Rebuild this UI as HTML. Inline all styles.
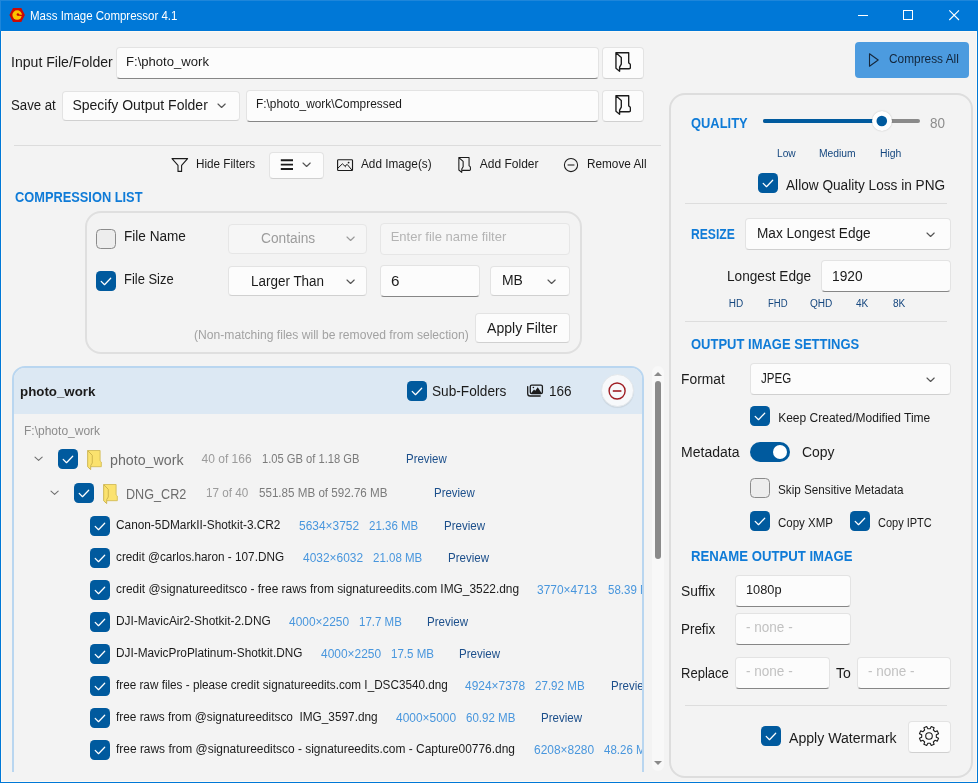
<!DOCTYPE html><html lang="en"><head><meta charset="utf-8"><title>Mass Image Compressor 4.1</title><style>

html,body{margin:0;padding:0;background:#f3f3f3;}
body{width:978px;height:783px;position:relative;overflow:hidden;font-family:"Liberation Sans", sans-serif;}
#w,#w div,#w svg,#w span{position:absolute;}
#w{left:0;top:0;width:978px;height:783px;overflow:hidden;will-change:transform;}
#lc{left:0;top:0;width:978px;height:772px;overflow:hidden;clip-path:inset(366px 334px 0 12px);}
#li{left:0;top:0;width:978px;height:772px;clip-path:inset(0 336px 0 14px);}
.t{white-space:pre;height:20px;line-height:20px;transform-origin:0 50%;}
.cb{width:20px;height:20px;box-sizing:border-box;border-radius:4.5px;}
.cb.on{background:#005a9e;}
.cb.off{background:#ededed;border:1px solid #8b8b8b;}

</style></head><body><div id="w">
<div style="left:0px;top:0px;width:978px;height:783px;background:#0078d7;"></div>
<div style="left:1px;top:31px;width:976px;height:751px;background:#fdf9f3;"></div>
<div style="left:2px;top:32px;width:974px;height:749px;background:#f3f3f3;"></div>
<div style="left:0px;top:0px;width:978px;height:1px;background:#1e86da;"></div>
<div style="left:0px;top:0px;width:1px;height:31px;background:#1e86da;"></div>
<svg style="left:9px;top:7px" width="17" height="16" viewBox="9 7 17 16"><path d="M9.4 15 L13 7.9 H21.3 L24.9 15 L21.3 22.1 H13 Z" fill="#cb0a04"/><circle cx="17.15" cy="15.1" r="4.75" fill="#fbc400"/><circle cx="17.9" cy="14.4" r="1.25" fill="#cb0a04"/><path d="M17.9 14.9 L22.2 15.6" stroke="#cb0a04" stroke-width="1.2"/></svg>
<svg style="left:853px;top:5px" width="120" height="22" viewBox="853 5 120 22"><path d="M858 15.5 H868" stroke="#fff" stroke-width="1"/><rect x="903.5" y="10.5" width="9" height="9" fill="none" stroke="#fff" stroke-width="1"/><path d="M949.3 10.3 L959 20 M959 10.3 L949.3 20" stroke="#fff" stroke-width="1.1"/></svg>
<div style="left:116px;top:47px;width:483px;height:32px;box-sizing:border-box;background:#fcfcfc;border:1px solid #e3e3e3;border-bottom:1px solid #868686;border-radius:4px;"></div>
<div style="left:602px;top:47px;width:42px;height:32px;box-sizing:border-box;background:#fcfcfc;border:1px solid #e3e3e3;border-bottom:1px solid #d0d0d0;border-radius:4px;"></div>
<svg style="left:615px;top:52px" width="16" height="20" viewBox="0 0 16 20"><path d="M0.95 0.7 H13.7 V10.9 Q15.4 11.6 15.4 13.1 V15.6 Q15.4 16.7 14.2 16.7 H5" fill="none" stroke="#1b1b1b" stroke-width="1.35" stroke-linejoin="round"/><path d="M0.95 0.7 L6.3 5.5 V12.1 L4.6 15.1 V19.2 L0.95 16.3 Z" fill="none" stroke="#1b1b1b" stroke-width="1.35" stroke-linejoin="round"/></svg>
<div style="left:62px;top:91px;width:178px;height:30px;box-sizing:border-box;background:#fcfcfc;border:1px solid #e3e3e3;border-bottom:1px solid #d0d0d0;border-radius:4px;"></div>
<svg style="left:216.4px;top:101.75px" width="11.2" height="7.5" viewBox="-2 -2 11.2 7.5"><path d="M0 0 L3.6 3.5 L7.2 0" fill="none" stroke="#555555" stroke-width="1.15" stroke-linecap="round" stroke-linejoin="round"/></svg>
<div style="left:246px;top:90px;width:353px;height:32px;box-sizing:border-box;background:#fcfcfc;border:1px solid #e3e3e3;border-bottom:1px solid #868686;border-radius:4px;"></div>
<div style="left:602px;top:90px;width:42px;height:32px;box-sizing:border-box;background:#fcfcfc;border:1px solid #e3e3e3;border-bottom:1px solid #d0d0d0;border-radius:4px;"></div>
<svg style="left:615px;top:95px" width="16" height="20" viewBox="0 0 16 20"><path d="M0.95 0.7 H13.7 V10.9 Q15.4 11.6 15.4 13.1 V15.6 Q15.4 16.7 14.2 16.7 H5" fill="none" stroke="#1b1b1b" stroke-width="1.35" stroke-linejoin="round"/><path d="M0.95 0.7 L6.3 5.5 V12.1 L4.6 15.1 V19.2 L0.95 16.3 Z" fill="none" stroke="#1b1b1b" stroke-width="1.35" stroke-linejoin="round"/></svg>
<div style="left:14px;top:145px;width:647px;height:1px;background:#dcdcdc;"></div>
<div style="left:855px;top:42px;width:114px;height:36px;background:#4c9bdf;border-radius:4px;"></div>
<svg style="left:867px;top:52px" width="14" height="16" viewBox="0 0 14 16"><path d="M2.5 1.8 L11.2 8 L2.5 14.2 Z" fill="none" stroke="#16283c" stroke-width="1.1" stroke-linejoin="round"/></svg>
<svg style="left:171px;top:157px" width="18" height="16" viewBox="0 0 18 16"><path d="M1 1.6 H16.6 L10.6 8.4 V14.4 H7 V8.4 Z" fill="none" stroke="#1b1b1b" stroke-width="1.1" stroke-linejoin="round"/></svg>
<div style="left:269px;top:152px;width:55px;height:27px;box-sizing:border-box;background:#fcfcfc;border:1px solid #e3e3e3;border-bottom:1px solid #d0d0d0;border-radius:4px;"></div>
<svg style="left:280px;top:158.4px" width="14" height="13" viewBox="0 0 14 13"><path d="M0.8 2.2 H13 M0.8 6.6 H13 M0.8 11 H13" stroke="#1b1b1b" stroke-width="1.9"/></svg>
<svg style="left:301.4px;top:161.25px" width="11.2" height="7.5" viewBox="-2 -2 11.2 7.5"><path d="M0 0 L3.6 3.5 L7.2 0" fill="none" stroke="#555555" stroke-width="1.15" stroke-linecap="round" stroke-linejoin="round"/></svg>
<svg style="left:336px;top:158px" width="18" height="14" viewBox="0 0 18 14"><rect x="1.6" y="1.7" width="14.9" height="10.8" rx="0.8" fill="none" stroke="#1b1b1b" stroke-width="1.15"/><path d="M1.4 10.6 L6.4 5.8 L9.8 9 M9 8.2 L11.2 6.4 L16 12.2" fill="none" stroke="#1b1b1b" stroke-width="1" stroke-linejoin="round"/><circle cx="12.6" cy="4.6" r="0.9" fill="#1b1b1b"/></svg>
<svg style="left:457.5px;top:157.3px" width="13" height="16" viewBox="0 0 16 20"><path d="M0.95 0.7 H13.7 V10.9 Q15.4 11.6 15.4 13.1 V15.6 Q15.4 16.7 14.2 16.7 H5" fill="none" stroke="#1b1b1b" stroke-width="1.35" stroke-linejoin="round"/><path d="M0.95 0.7 L6.3 5.5 V12.1 L4.6 15.1 V19.2 L0.95 16.3 Z" fill="none" stroke="#1b1b1b" stroke-width="1.35" stroke-linejoin="round"/></svg>
<svg style="left:563px;top:157px" width="16" height="16" viewBox="0 0 16 16"><circle cx="8" cy="8" r="6.6" fill="none" stroke="#1b1b1b" stroke-width="1.05"/><path d="M4.6 8 H11.4" stroke="#1b1b1b" stroke-width="1.05"/></svg>
<div style="left:85px;top:211px;width:497px;height:143px;box-sizing:border-box;border:2px solid #dfdfdf;border-radius:16px;"></div>
<div class="cb off" style="left:96px;top:229px"></div>
<div style="left:228px;top:224px;width:139px;height:30px;box-sizing:border-box;background:#f6f6f6;border:1px solid #e6e6e6;border-radius:4px;"></div>
<svg style="left:344.7px;top:235.25px" width="11.2" height="7.5" viewBox="-2 -2 11.2 7.5"><path d="M0 0 L3.6 3.5 L7.2 0" fill="none" stroke="#9a9a9a" stroke-width="1.15" stroke-linecap="round" stroke-linejoin="round"/></svg>
<div style="left:380px;top:223px;width:190px;height:32px;box-sizing:border-box;background:#f6f6f6;border:1px solid #e6e6e6;border-radius:4px;"></div>
<div class="cb on" style="left:96px;top:271px"><svg width="20" height="20" viewBox="0 0 20 20"><path d="M5.2 10.4 L8.5 13.7 L14.7 7.2" fill="none" stroke="#fff" stroke-width="1.25" stroke-linecap="round" stroke-linejoin="round"/></svg></div>
<div style="left:228px;top:266px;width:139px;height:30px;box-sizing:border-box;background:#fcfcfc;border:1px solid #e3e3e3;border-bottom:1px solid #d0d0d0;border-radius:4px;"></div>
<svg style="left:344.7px;top:277.75px" width="11.2" height="7.5" viewBox="-2 -2 11.2 7.5"><path d="M0 0 L3.6 3.5 L7.2 0" fill="none" stroke="#555555" stroke-width="1.15" stroke-linecap="round" stroke-linejoin="round"/></svg>
<div style="left:380px;top:265px;width:100px;height:32px;box-sizing:border-box;background:#fcfcfc;border:1px solid #e3e3e3;border-bottom:1px solid #868686;border-radius:4px;"></div>
<div style="left:490px;top:266px;width:80px;height:30px;box-sizing:border-box;background:#fcfcfc;border:1px solid #e3e3e3;border-bottom:1px solid #d0d0d0;border-radius:4px;"></div>
<svg style="left:546.4px;top:277.75px" width="11.2" height="7.5" viewBox="-2 -2 11.2 7.5"><path d="M0 0 L3.6 3.5 L7.2 0" fill="none" stroke="#555555" stroke-width="1.15" stroke-linecap="round" stroke-linejoin="round"/></svg>
<div style="left:475px;top:313px;width:95px;height:30px;box-sizing:border-box;background:#fcfcfc;border:1px solid #e3e3e3;border-bottom:1px solid #d0d0d0;border-radius:4px;"></div>
<div style="left:652px;top:366px;width:12px;height:405px;background:#f8f8f8;border-radius:6px;"></div>
<svg style="left:653px;top:371px" width="10" height="6" viewBox="0 0 10 6"><path d="M1 5 L5 1 L9 5 Z" fill="#8a8a8a"/></svg>
<div style="left:655px;top:381px;width:6px;height:177.5px;background:#8a8a8a;border-radius:3px;"></div>
<svg style="left:653px;top:760px" width="10" height="6" viewBox="0 0 10 6"><path d="M1 1 L5 5 L9 1 Z" fill="#8a8a8a"/></svg>
<div style="left:669px;top:93px;width:304px;height:685px;box-sizing:border-box;border:2px solid #dddddd;border-radius:16px;"></div>
<div style="left:763px;top:119px;width:157px;height:4px;background:#8a8a8a;border-radius:2px;"></div>
<div style="left:763px;top:119px;width:119px;height:4px;background:#005a9e;border-radius:2px;"></div>
<div style="left:871.7px;top:111px;width:20px;height:20px;border-radius:10px;background:#fff;box-shadow:0 0 1.5px rgba(0,0,0,.25)"></div>
<svg style="left:871px;top:110px" width="22" height="22" viewBox="0 0 22 22"><circle cx="10.8" cy="11" r="5.3" fill="#005a9e"/></svg>
<div class="cb on" style="left:758px;top:173px"><svg width="20" height="20" viewBox="0 0 20 20"><path d="M5.2 10.4 L8.5 13.7 L14.7 7.2" fill="none" stroke="#fff" stroke-width="1.25" stroke-linecap="round" stroke-linejoin="round"/></svg></div>
<div style="left:685px;top:203px;width:261.5px;height:1px;background:#dddddd;"></div>
<div style="left:745px;top:218px;width:206px;height:32px;box-sizing:border-box;background:#fcfcfc;border:1px solid #e3e3e3;border-bottom:1px solid #d0d0d0;border-radius:4px;"></div>
<svg style="left:925.1999999999999px;top:230.75px" width="11.2" height="7.5" viewBox="-2 -2 11.2 7.5"><path d="M0 0 L3.6 3.5 L7.2 0" fill="none" stroke="#555555" stroke-width="1.15" stroke-linecap="round" stroke-linejoin="round"/></svg>
<div style="left:821px;top:260px;width:130px;height:32px;box-sizing:border-box;background:#fcfcfc;border:1px solid #e3e3e3;border-bottom:1px solid #868686;border-radius:4px;"></div>
<div style="left:685px;top:321px;width:261.5px;height:1px;background:#dddddd;"></div>
<div style="left:750px;top:363px;width:201px;height:32px;box-sizing:border-box;background:#fcfcfc;border:1px solid #e3e3e3;border-bottom:1px solid #d0d0d0;border-radius:4px;"></div>
<svg style="left:925.1999999999999px;top:375.75px" width="11.2" height="7.5" viewBox="-2 -2 11.2 7.5"><path d="M0 0 L3.6 3.5 L7.2 0" fill="none" stroke="#555555" stroke-width="1.15" stroke-linecap="round" stroke-linejoin="round"/></svg>
<div class="cb on" style="left:750px;top:406px"><svg width="20" height="20" viewBox="0 0 20 20"><path d="M5.2 10.4 L8.5 13.7 L14.7 7.2" fill="none" stroke="#fff" stroke-width="1.25" stroke-linecap="round" stroke-linejoin="round"/></svg></div>
<div style="left:750px;top:442px;width:40px;height:20px;background:#005a9e;border-radius:10px;"></div>
<div style="left:772.6px;top:445px;width:14px;height:14px;border-radius:7px;background:#fff"></div>
<div class="cb off" style="left:750px;top:478px"></div>
<div class="cb on" style="left:750px;top:511px"><svg width="20" height="20" viewBox="0 0 20 20"><path d="M5.2 10.4 L8.5 13.7 L14.7 7.2" fill="none" stroke="#fff" stroke-width="1.25" stroke-linecap="round" stroke-linejoin="round"/></svg></div>
<div class="cb on" style="left:850px;top:511px"><svg width="20" height="20" viewBox="0 0 20 20"><path d="M5.2 10.4 L8.5 13.7 L14.7 7.2" fill="none" stroke="#fff" stroke-width="1.25" stroke-linecap="round" stroke-linejoin="round"/></svg></div>
<div style="left:735px;top:575px;width:116px;height:32px;box-sizing:border-box;background:#fcfcfc;border:1px solid #e3e3e3;border-bottom:1px solid #868686;border-radius:4px;"></div>
<div style="left:735px;top:613px;width:116px;height:32px;box-sizing:border-box;background:#fcfcfc;border:1px solid #e3e3e3;border-bottom:1px solid #868686;border-radius:4px;"></div>
<div style="left:735px;top:657px;width:95px;height:32px;box-sizing:border-box;background:#fcfcfc;border:1px solid #e3e3e3;border-bottom:1px solid #868686;border-radius:4px;"></div>
<div style="left:857px;top:657px;width:94px;height:32px;box-sizing:border-box;background:#fcfcfc;border:1px solid #e3e3e3;border-bottom:1px solid #868686;border-radius:4px;"></div>
<div style="left:685px;top:705px;width:261.5px;height:1px;background:#dddddd;"></div>
<div class="cb on" style="left:761px;top:726px"><svg width="20" height="20" viewBox="0 0 20 20"><path d="M5.2 10.4 L8.5 13.7 L14.7 7.2" fill="none" stroke="#fff" stroke-width="1.25" stroke-linecap="round" stroke-linejoin="round"/></svg></div>
<div style="left:908px;top:721px;width:43px;height:32px;box-sizing:border-box;background:#fcfcfc;border:1px solid #e3e3e3;border-bottom:1px solid #d0d0d0;border-radius:4px;"></div>
<svg style="left:918px;top:725px" width="22" height="22" viewBox="0 0 22 22"><path d="M20.53 13.29 L19.36 16.12 L16.99 15.35 L15.35 16.99 L16.12 19.36 L13.29 20.53 L12.16 18.31 L9.84 18.31 L8.71 20.53 L5.88 19.36 L6.65 16.99 L5.01 15.35 L2.64 16.12 L1.47 13.29 L3.69 12.16 L3.69 9.84 L1.47 8.71 L2.64 5.88 L5.01 6.65 L6.65 5.01 L5.88 2.64 L8.71 1.47 L9.84 3.69 L12.16 3.69 L13.29 1.47 L16.12 2.64 L15.35 5.01 L16.99 6.65 L19.36 5.88 L20.53 8.71 L18.31 9.84 L18.31 12.16 Z" fill="none" stroke="#1b1b1b" stroke-width="1.1" stroke-linejoin="round"/><circle cx="11" cy="11" r="3.3" fill="none" stroke="#1b1b1b" stroke-width="1.1"/></svg>
<div id="lc">
<div style="left:12px;top:366px;width:632px;height:460px;box-sizing:border-box;border:2px solid #b9d6f0;border-radius:13px;background:#f3f3f3;overflow:hidden"><div style="left:0;top:0;width:632px;height:46px;background:#dce8f3"></div></div>
<div id="li">
<div class="cb on" style="left:407px;top:381px"><svg width="20" height="20" viewBox="0 0 20 20"><path d="M5.2 10.4 L8.5 13.7 L14.7 7.2" fill="none" stroke="#fff" stroke-width="1.25" stroke-linecap="round" stroke-linejoin="round"/></svg></div>
<svg style="left:526px;top:383px" width="18" height="15" viewBox="526 383 18 15"><path d="M527.7 386.6 V393.4 Q527.7 396 530.2 396 H540.2" fill="none" stroke="#1b1b1b" stroke-width="1.3" stroke-linecap="round"/><rect x="530.3" y="385.2" width="12.1" height="8.5" rx="1.4" fill="none" stroke="#1b1b1b" stroke-width="1.3"/><path d="M530.8 393.4 L534 389.6 L535.3 390.8 L537.7 387.3 L541.9 393.4 Z" fill="#1b1b1b"/><circle cx="533.4" cy="387.5" r="0.8" fill="#1b1b1b"/></svg>
<div style="left:600.6px;top:374.4px;width:33px;height:33px;box-sizing:border-box;border-radius:17px;background:#f7f9fb;border:1px solid #e3e7eb;box-shadow:0 1px 1px rgba(0,0,0,.08)"></div>
<svg style="left:607px;top:381px" width="20" height="20" viewBox="0 0 20 20"><circle cx="10.1" cy="10" r="8" fill="none" stroke="#9f1d23" stroke-width="1.4"/><path d="M5.8 10 H14.4" stroke="#9f1d23" stroke-width="1.6"/></svg>
<svg style="left:32.6px;top:455.45px" width="11.2" height="7.5" viewBox="-2 -2 11.2 7.5"><path d="M0 0 L3.6 3.5 L7.2 0" fill="none" stroke="#6e6e6e" stroke-width="1.05" stroke-linecap="round" stroke-linejoin="round"/></svg>
<div class="cb on" style="left:58px;top:449px"><svg width="20" height="20" viewBox="0 0 20 20"><path d="M5.2 10.4 L8.5 13.7 L14.7 7.2" fill="none" stroke="#fff" stroke-width="1.25" stroke-linecap="round" stroke-linejoin="round"/></svg></div>
<svg style="left:86.6px;top:450px" width="16" height="21" viewBox="0 0 16 21"><path d="M0.66 0.5 H13.1 V10.9 L14.3 12 V16.7 H4" fill="#fbe26e" stroke="#d3bc58" stroke-width="0.9" stroke-linejoin="round"/><path d="M0.66 0.6 L5.27 5.3 V13 L3.7 15.6 V19.6 L0.66 16.8 Z" fill="#fbe26e" stroke="#c9b04a" stroke-width="0.9" stroke-linejoin="round"/></svg>
<svg style="left:48.6px;top:489.25px" width="11.2" height="7.5" viewBox="-2 -2 11.2 7.5"><path d="M0 0 L3.6 3.5 L7.2 0" fill="none" stroke="#6e6e6e" stroke-width="1.05" stroke-linecap="round" stroke-linejoin="round"/></svg>
<div class="cb on" style="left:74px;top:483px"><svg width="20" height="20" viewBox="0 0 20 20"><path d="M5.2 10.4 L8.5 13.7 L14.7 7.2" fill="none" stroke="#fff" stroke-width="1.25" stroke-linecap="round" stroke-linejoin="round"/></svg></div>
<svg style="left:102.6px;top:484px" width="16" height="21" viewBox="0 0 16 21"><path d="M0.66 0.5 H13.1 V10.9 L14.3 12 V16.7 H4" fill="#fbe26e" stroke="#d3bc58" stroke-width="0.9" stroke-linejoin="round"/><path d="M0.66 0.6 L5.27 5.3 V13 L3.7 15.6 V19.6 L0.66 16.8 Z" fill="#fbe26e" stroke="#c9b04a" stroke-width="0.9" stroke-linejoin="round"/></svg>
<div class="cb on" style="left:90px;top:516px"><svg width="20" height="20" viewBox="0 0 20 20"><path d="M5.2 10.4 L8.5 13.7 L14.7 7.2" fill="none" stroke="#fff" stroke-width="1.25" stroke-linecap="round" stroke-linejoin="round"/></svg></div>
<div class="cb on" style="left:90px;top:548px"><svg width="20" height="20" viewBox="0 0 20 20"><path d="M5.2 10.4 L8.5 13.7 L14.7 7.2" fill="none" stroke="#fff" stroke-width="1.25" stroke-linecap="round" stroke-linejoin="round"/></svg></div>
<div class="cb on" style="left:90px;top:580px"><svg width="20" height="20" viewBox="0 0 20 20"><path d="M5.2 10.4 L8.5 13.7 L14.7 7.2" fill="none" stroke="#fff" stroke-width="1.25" stroke-linecap="round" stroke-linejoin="round"/></svg></div>
<div class="cb on" style="left:90px;top:612px"><svg width="20" height="20" viewBox="0 0 20 20"><path d="M5.2 10.4 L8.5 13.7 L14.7 7.2" fill="none" stroke="#fff" stroke-width="1.25" stroke-linecap="round" stroke-linejoin="round"/></svg></div>
<div class="cb on" style="left:90px;top:644px"><svg width="20" height="20" viewBox="0 0 20 20"><path d="M5.2 10.4 L8.5 13.7 L14.7 7.2" fill="none" stroke="#fff" stroke-width="1.25" stroke-linecap="round" stroke-linejoin="round"/></svg></div>
<div class="cb on" style="left:90px;top:676px"><svg width="20" height="20" viewBox="0 0 20 20"><path d="M5.2 10.4 L8.5 13.7 L14.7 7.2" fill="none" stroke="#fff" stroke-width="1.25" stroke-linecap="round" stroke-linejoin="round"/></svg></div>
<div class="cb on" style="left:90px;top:708px"><svg width="20" height="20" viewBox="0 0 20 20"><path d="M5.2 10.4 L8.5 13.7 L14.7 7.2" fill="none" stroke="#fff" stroke-width="1.25" stroke-linecap="round" stroke-linejoin="round"/></svg></div>
<div class="cb on" style="left:90px;top:740px"><svg width="20" height="20" viewBox="0 0 20 20"><path d="M5.2 10.4 L8.5 13.7 L14.7 7.2" fill="none" stroke="#fff" stroke-width="1.25" stroke-linecap="round" stroke-linejoin="round"/></svg></div>
<span class="t" style="left:20.2px;top:381.6px;font-size:13px;color:#1b1b1b;font-weight:700;transform:scaleX(1.0236);">photo_work</span>
<span class="t" style="left:431.7px;top:381.2px;font-size:14px;color:#1b1b1b;transform:scaleX(0.9753);">Sub-Folders</span>
<span class="t" style="left:549.0px;top:381.2px;font-size:14px;color:#1b1b1b;transform:scaleX(0.9666);">166</span>
<span class="t" style="left:24.0px;top:421.3px;font-size:13px;color:#8c8c8c;transform:scaleX(0.9239);">F:\photo_work</span>
<span class="t" style="left:109.8px;top:450.3px;font-size:14px;color:#6c6c6c;transform:scaleX(1.0164);">photo_work</span>
<span class="t" style="left:201.6px;top:449.0px;font-size:12px;color:#9b9b9b;">40 of 166</span>
<span class="t" style="left:262.3px;top:449.0px;font-size:12px;color:#7b7b7b;transform:scaleX(0.9304);">1.05 GB of 1.18 GB</span>
<span class="t" style="left:405.9px;top:449.0px;font-size:12px;color:#1c4f8b;transform:scaleX(0.9544);">Preview</span>
<span class="t" style="left:125.7px;top:484.0px;font-size:14px;color:#6c6c6c;transform:scaleX(0.9010);">DNG_CR2</span>
<span class="t" style="left:205.6px;top:482.8px;font-size:12px;color:#9b9b9b;transform:scaleX(0.9738);">17 of 40</span>
<span class="t" style="left:259.3px;top:482.8px;font-size:12px;color:#7b7b7b;transform:scaleX(0.9675);">551.85 MB of 592.76 MB</span>
<span class="t" style="left:434.1px;top:482.8px;font-size:12px;color:#1c4f8b;transform:scaleX(0.9544);">Preview</span>
<span class="t" style="left:115.7px;top:515.4px;font-size:12px;color:#1b1b1b;transform:scaleX(0.9862);">Canon-5DMarkII-Shotkit-3.CR2</span>
<span class="t" style="left:299.1px;top:515.9px;font-size:12px;color:#4896dd;transform:scaleX(0.9939);">5634×3752</span>
<span class="t" style="left:368.8px;top:515.9px;font-size:12px;color:#4896dd;transform:scaleX(0.9584);">21.36 MB</span>
<span class="t" style="left:443.9px;top:515.7px;font-size:12px;color:#1c4f8b;transform:scaleX(0.9614);">Preview</span>
<span class="t" style="left:115.7px;top:547.4px;font-size:12px;color:#1b1b1b;transform:scaleX(0.9793);">credit @carlos.haron - 107.DNG</span>
<span class="t" style="left:302.8px;top:547.9px;font-size:12px;color:#4896dd;transform:scaleX(0.9939);">4032×6032</span>
<span class="t" style="left:372.8px;top:547.9px;font-size:12px;color:#4896dd;transform:scaleX(0.9584);">21.08 MB</span>
<span class="t" style="left:447.9px;top:547.7px;font-size:12px;color:#1c4f8b;transform:scaleX(0.9614);">Preview</span>
<span class="t" style="left:115.7px;top:579.4px;font-size:12px;color:#1b1b1b;transform:scaleX(0.9920);">credit @signatureeditsco - free raws from signatureedits.com IMG_3522.dng</span>
<span class="t" style="left:537.4px;top:579.9px;font-size:12px;color:#4896dd;transform:scaleX(0.9939);">3770×4713</span>
<span class="t" style="left:607.7px;top:579.9px;font-size:12px;color:#4896dd;transform:scaleX(0.9584);">58.39 MB</span>
<span class="t" style="left:682.5px;top:579.7px;font-size:12px;color:#1c4f8b;transform:scaleX(0.9614);">Preview</span>
<span class="t" style="left:115.7px;top:611.4px;font-size:12px;color:#1b1b1b;transform:scaleX(0.9924);">DJI-MavicAir2-Shotkit-2.DNG</span>
<span class="t" style="left:289.1px;top:611.9px;font-size:12px;color:#4896dd;transform:scaleX(0.9939);">4000×2250</span>
<span class="t" style="left:359.1px;top:611.9px;font-size:12px;color:#4896dd;transform:scaleX(0.9583);">17.7 MB</span>
<span class="t" style="left:426.9px;top:611.7px;font-size:12px;color:#1c4f8b;transform:scaleX(0.9614);">Preview</span>
<span class="t" style="left:115.7px;top:643.4px;font-size:12px;color:#1b1b1b;transform:scaleX(0.9845);">DJI-MavicProPlatinum-Shotkit.DNG</span>
<span class="t" style="left:320.9px;top:643.9px;font-size:12px;color:#4896dd;transform:scaleX(0.9939);">4000×2250</span>
<span class="t" style="left:391.0px;top:643.9px;font-size:12px;color:#4896dd;transform:scaleX(0.9606);">17.5 MB</span>
<span class="t" style="left:458.8px;top:643.7px;font-size:12px;color:#1c4f8b;transform:scaleX(0.9614);">Preview</span>
<span class="t" style="left:115.7px;top:675.4px;font-size:12px;color:#1b1b1b;transform:scaleX(0.9774);">free raw files - please credit signatureedits.com I_DSC3540.dng</span>
<span class="t" style="left:465.3px;top:675.9px;font-size:12px;color:#4896dd;transform:scaleX(0.9939);">4924×7378</span>
<span class="t" style="left:535.3px;top:675.9px;font-size:12px;color:#4896dd;transform:scaleX(0.9662);">27.92 MB</span>
<span class="t" style="left:610.5px;top:675.7px;font-size:12px;color:#1c4f8b;transform:scaleX(0.9614);">Preview</span>
<span class="t" style="left:115.7px;top:707.4px;font-size:12px;color:#1b1b1b;transform:scaleX(0.9849);">free raws from @signatureeditsco  IMG_3597.dng</span>
<span class="t" style="left:395.5px;top:707.9px;font-size:12px;color:#4896dd;transform:scaleX(0.9939);">4000×5000</span>
<span class="t" style="left:465.5px;top:707.9px;font-size:12px;color:#4896dd;transform:scaleX(0.9623);">60.92 MB</span>
<span class="t" style="left:540.9px;top:707.7px;font-size:12px;color:#1c4f8b;transform:scaleX(0.9614);">Preview</span>
<span class="t" style="left:115.7px;top:739.4px;font-size:12px;color:#1b1b1b;transform:scaleX(0.9947);">free raws from @signatureeditsco - signatureedits.com - Capture00776.dng</span>
<span class="t" style="left:533.6px;top:739.9px;font-size:12px;color:#4896dd;transform:scaleX(0.9939);">6208×8280</span>
<span class="t" style="left:603.5px;top:739.9px;font-size:12px;color:#4896dd;transform:scaleX(0.9584);">48.26 MB</span>
<span class="t" style="left:678.5px;top:739.7px;font-size:12px;color:#1c4f8b;transform:scaleX(0.9614);">Preview</span>
</div></div>
<span class="t" style="left:30.2px;top:5.5px;font-size:12px;color:#ffffff;transform:scaleX(0.9570);">Mass Image Compressor 4.1</span>
<span class="t" style="left:10.6px;top:52.0px;font-size:14px;color:#1b1b1b;transform:scaleX(1.0060);">Input File/Folder</span>
<span class="t" style="left:125.5px;top:52.4px;font-size:13.5px;color:#1b1b1b;transform:scaleX(0.9696);">F:\photo_work</span>
<span class="t" style="left:10.6px;top:95.0px;font-size:14px;color:#1b1b1b;transform:scaleX(0.9430);">Save at</span>
<span class="t" style="left:72.4px;top:95.0px;font-size:14px;color:#1b1b1b;">Specify Output Folder</span>
<span class="t" style="left:255.5px;top:94.0px;font-size:12px;color:#1b1b1b;transform:scaleX(0.9894);">F:\photo_work\Compressed</span>
<span class="t" style="left:888.5px;top:48.8px;font-size:12px;color:#13263b;transform:scaleX(0.9880);">Compress All</span>
<span class="t" style="left:196.1px;top:153.8px;font-size:12px;color:#1b1b1b;transform:scaleX(0.9761);">Hide Filters</span>
<span class="t" style="left:360.9px;top:153.8px;font-size:12px;color:#1b1b1b;transform:scaleX(0.9807);">Add Image(s)</span>
<span class="t" style="left:479.8px;top:153.8px;font-size:12px;color:#1b1b1b;">Add Folder</span>
<span class="t" style="left:586.5px;top:153.8px;font-size:12px;color:#1b1b1b;transform:scaleX(0.9808);">Remove All</span>
<span class="t" style="left:15.4px;top:187.0px;font-size:14px;color:#0f7bd7;font-weight:700;transform:scaleX(0.9156);">COMPRESSION LIST</span>
<span class="t" style="left:123.8px;top:226.2px;font-size:14px;color:#1b1b1b;transform:scaleX(0.9700);">File Name</span>
<span class="t" style="left:260.8px;top:227.7px;font-size:14px;color:#9c9c9c;transform:scaleX(0.9804);">Contains</span>
<span class="t" style="left:390.7px;top:227.0px;font-size:13px;color:#b4b4b4;">Enter file name filter</span>
<span class="t" style="left:123.8px;top:268.5px;font-size:14px;color:#1b1b1b;transform:scaleX(0.9235);">File Size</span>
<span class="t" style="left:250.9px;top:270.5px;font-size:14px;color:#1b1b1b;transform:scaleX(0.9614);">Larger Than</span>
<span class="t" style="left:391.1px;top:271.3px;font-size:14px;color:#1b1b1b;transform:scaleX(1.0876);">6</span>
<span class="t" style="left:501.7px;top:270.2px;font-size:14px;color:#1b1b1b;transform:scaleX(0.9943);">MB</span>
<span class="t" style="left:193.9px;top:325.0px;font-size:12px;color:#a2a2a2;transform:scaleX(1.0097);">(Non-matching files will be removed from selection)</span>
<span class="t" style="left:486.8px;top:317.5px;font-size:14px;color:#1b1b1b;transform:scaleX(1.0050);">Apply Filter</span>
<span class="t" style="left:690.7px;top:113.0px;font-size:14px;color:#0f7bd7;font-weight:700;transform:scaleX(0.9223);">QUALITY</span>
<span class="t" style="left:929.9px;top:113.3px;font-size:14px;color:#8d8d8d;transform:scaleX(0.9616);">80</span>
<span class="t" style="left:776.5px;top:143.8px;font-size:10px;color:#15477f;transform:scaleX(1.0186);">Low</span>
<span class="t" style="left:818.8px;top:143.8px;font-size:10px;color:#15477f;transform:scaleX(1.0315);">Medium</span>
<span class="t" style="left:879.8px;top:143.8px;font-size:10px;color:#15477f;transform:scaleX(1.0399);">High</span>
<span class="t" style="left:785.7px;top:175.0px;font-size:14px;color:#1b1b1b;transform:scaleX(0.9741);">Allow Quality Loss in PNG</span>
<span class="t" style="left:690.8px;top:224.0px;font-size:14px;color:#0f7bd7;font-weight:700;transform:scaleX(0.8676);">RESIZE</span>
<span class="t" style="left:757.0px;top:222.8px;font-size:14px;color:#1b1b1b;transform:scaleX(0.9737);">Max Longest Edge</span>
<span class="t" style="left:726.7px;top:265.7px;font-size:14px;color:#1b1b1b;transform:scaleX(0.9742);">Longest Edge</span>
<span class="t" style="left:831.9px;top:265.7px;font-size:14px;color:#1b1b1b;transform:scaleX(0.9815);">1920</span>
<span class="t" style="left:728.8px;top:293.8px;font-size:10px;color:#15477f;">HD</span>
<span class="t" style="left:767.9px;top:293.8px;font-size:10px;color:#15477f;transform:scaleX(0.9532);">FHD</span>
<span class="t" style="left:810.4px;top:293.8px;font-size:10px;color:#15477f;transform:scaleX(1.0074);">QHD</span>
<span class="t" style="left:856.4px;top:293.8px;font-size:10px;color:#15477f;transform:scaleX(1.0054);">4K</span>
<span class="t" style="left:892.6px;top:293.8px;font-size:10px;color:#15477f;transform:scaleX(1.0054);">8K</span>
<span class="t" style="left:690.5px;top:334.0px;font-size:14px;color:#0f7bd7;font-weight:700;transform:scaleX(0.9280);">OUTPUT IMAGE SETTINGS</span>
<span class="t" style="left:681.1px;top:368.9px;font-size:14px;color:#1b1b1b;transform:scaleX(0.9873);">Format</span>
<span class="t" style="left:761.4px;top:367.7px;font-size:14px;color:#1b1b1b;transform:scaleX(0.8278);">JPEG</span>
<span class="t" style="left:778.2px;top:408.0px;font-size:12px;color:#1b1b1b;">Keep Created/Modified Time</span>
<span class="t" style="left:681.1px;top:442.4px;font-size:14px;color:#1b1b1b;">Metadata</span>
<span class="t" style="left:801.7px;top:442.0px;font-size:14px;color:#1b1b1b;transform:scaleX(0.9937);">Copy</span>
<span class="t" style="left:778.2px;top:479.8px;font-size:12px;color:#1b1b1b;transform:scaleX(0.9751);">Skip Sensitive Metadata</span>
<span class="t" style="left:778.2px;top:513.0px;font-size:12px;color:#1b1b1b;transform:scaleX(0.9578);">Copy XMP</span>
<span class="t" style="left:877.7px;top:513.0px;font-size:12px;color:#1b1b1b;transform:scaleX(0.9157);">Copy IPTC</span>
<span class="t" style="left:690.8px;top:545.7px;font-size:14px;color:#0f7bd7;font-weight:700;transform:scaleX(0.9400);">RENAME OUTPUT IMAGE</span>
<span class="t" style="left:681.1px;top:581.0px;font-size:14px;color:#1b1b1b;transform:scaleX(0.9860);">Suffix</span>
<span class="t" style="left:746.0px;top:580.0px;font-size:13px;color:#1b1b1b;transform:scaleX(0.9849);">1080p</span>
<span class="t" style="left:681.1px;top:619.4px;font-size:14px;color:#1b1b1b;transform:scaleX(0.9576);">Prefix</span>
<span class="t" style="left:745.9px;top:616.8px;font-size:14px;color:#c2c2c2;transform:scaleX(0.9675);">- none -</span>
<span class="t" style="left:681.1px;top:663.3px;font-size:14px;color:#1b1b1b;transform:scaleX(0.9320);">Replace</span>
<span class="t" style="left:745.9px;top:660.8px;font-size:14px;color:#c2c2c2;transform:scaleX(0.9675);">- none -</span>
<span class="t" style="left:835.7px;top:663.3px;font-size:14px;color:#1b1b1b;transform:scaleX(1.0056);">To</span>
<span class="t" style="left:867.8px;top:660.8px;font-size:14px;color:#c2c2c2;transform:scaleX(0.9654);">- none -</span>
<span class="t" style="left:788.8px;top:728.2px;font-size:14px;color:#1b1b1b;transform:scaleX(1.0078);">Apply Watermark</span>
</div></body></html>
